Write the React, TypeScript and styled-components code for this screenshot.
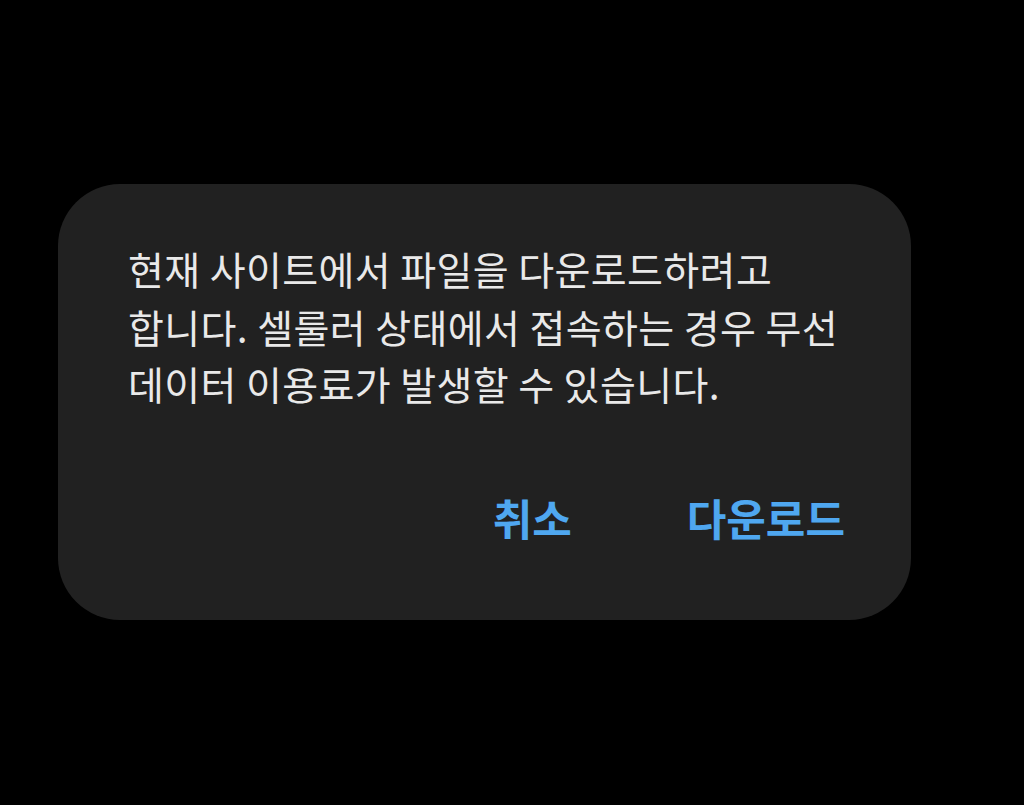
import { FC } from "react";
import styled, { createGlobalStyle } from "styled-components";

const GlobalStyle = createGlobalStyle`
  html, body {
    margin: 0;
    padding: 0;
    background: #000;
  }
  body {
    font-family: "Noto Sans CJK KR", "Noto Sans", sans-serif;
  }
`;

const Screen = styled.div`
  width: 1024px;
  height: 805px;
  background: #000;
  padding: 184px 0 0 58px;
  box-sizing: border-box;
`;

const Dialog = styled.div`
  width: 853px;
  height: 436px;
  box-sizing: border-box;
  background: #212121;
  border-radius: 62px;
  padding: 56px 66px 0 70px;
  display: flex;
  flex-direction: column;
`;

const Message = styled.p`
  margin: 0;
  color: #e9e9e9;
  font-size: 39px;
  line-height: 57.5px;
  font-weight: 400;
  letter-spacing: 0.4px;
  white-space: nowrap;
`;

const Actions = styled.div`
  display: flex;
  justify-content: flex-end;
  gap: 115px;
  margin-top: 78px;
`;

const ActionButton = styled.button`
  background: none;
  border: none;
  padding: 0;
  color: #4fa7f0;
  font-family: inherit;
  font-size: 43px;
  font-weight: 700;
  line-height: 52px;
  cursor: pointer;
`;

const App: FC = () => {
  return (
    <>
      <GlobalStyle />
      <Screen>
        <Dialog>
          <Message>
            현재 사이트에서 파일을 다운로드하려고
            <br />
            합니다. 셀룰러 상태에서 접속하는 경우 무선
            <br />
            데이터 이용료가 발생할 수 있습니다.
          </Message>
          <Actions>
            <ActionButton>취소</ActionButton>
            <ActionButton>다운로드</ActionButton>
          </Actions>
        </Dialog>
      </Screen>
    </>
  );
};

export default App;
